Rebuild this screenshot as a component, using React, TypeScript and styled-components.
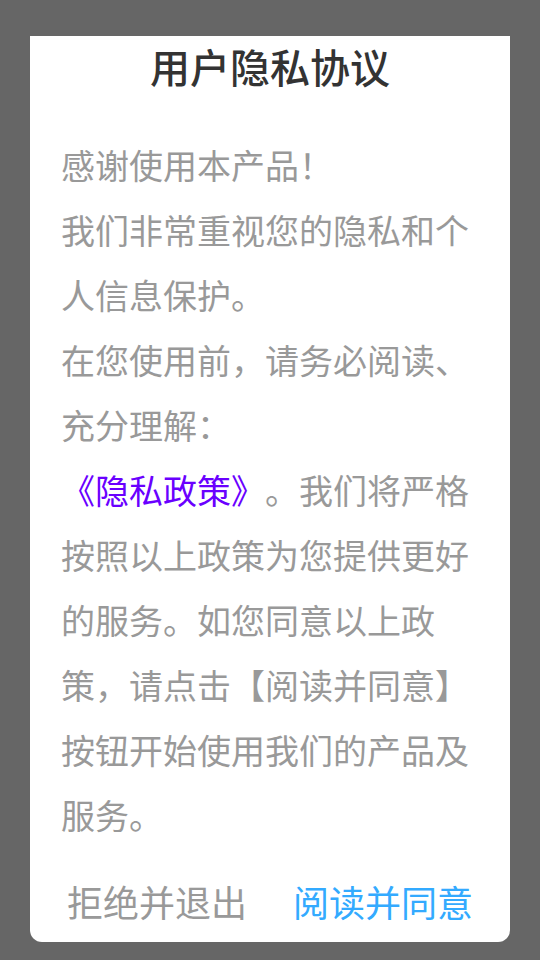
import React from 'react';
import styled, { createGlobalStyle } from 'styled-components';

const GlobalStyle = createGlobalStyle`
  html, body {
    margin: 0;
    padding: 0;
    background: #666666;
  }
  body {
    font-family: "Noto Sans CJK SC", "Noto Sans", sans-serif;
  }
`;

const Screen = styled.div`
  width: 540px;
  height: 960px;
  background: #666666;
  padding: 36px 30px 0;
  box-sizing: border-box;
`;

const Card = styled.div`
  height: 906px;
  background: #ffffff;
  border-radius: 0 0 12px 12px;
  display: flex;
  flex-direction: column;
`;

const Title = styled.h1`
  margin: 0;
  height: 60px;
  line-height: 60px;
  text-align: center;
  font-size: 40px;
  font-weight: 500;
  color: #333333;
`;

const Body = styled.div`
  flex: 1;
  margin-top: 36px;
  padding: 0 31px;
  font-size: 34px;
  line-height: 65px;
  color: #999999;
  text-spacing-trim: space-all;
`;

const Link = styled.span`
  color: #6a00ff;
`;

const Footer = styled.div`
  height: 78px;
  display: flex;
  justify-content: center;
  align-items: center;
  gap: 46px;
`;

const Button = styled.button<{ primary?: boolean }>`
  border: none;
  background: none;
  padding: 0 0 4px;
  font-family: inherit;
  font-size: 36px;
  line-height: 44px;
  color: ${({ primary }) => (primary ? '#33aaff' : '#999999')};
`;

const App: React.FC = () => {
  return (
    <Screen>
      <GlobalStyle />
      <Card>
        <Title>用户隐私协议</Title>
        <Body>
          感谢使用本产品！
          <br />
          我们非常重视您的隐私和个人信息保护。
          <br />
          在您使用前，请务必阅读、充分理解：
          <br />
          <Link>《隐私政策》</Link>。我们将严格按照以上政策为您提供更好的服务。如您同意以上政策，请点击【阅读并同意】按钮开始使用我们的产品及服务。
        </Body>
        <Footer>
          <Button>拒绝并退出</Button>
          <Button primary>阅读并同意</Button>
        </Footer>
      </Card>
    </Screen>
  );
};

export default App;
